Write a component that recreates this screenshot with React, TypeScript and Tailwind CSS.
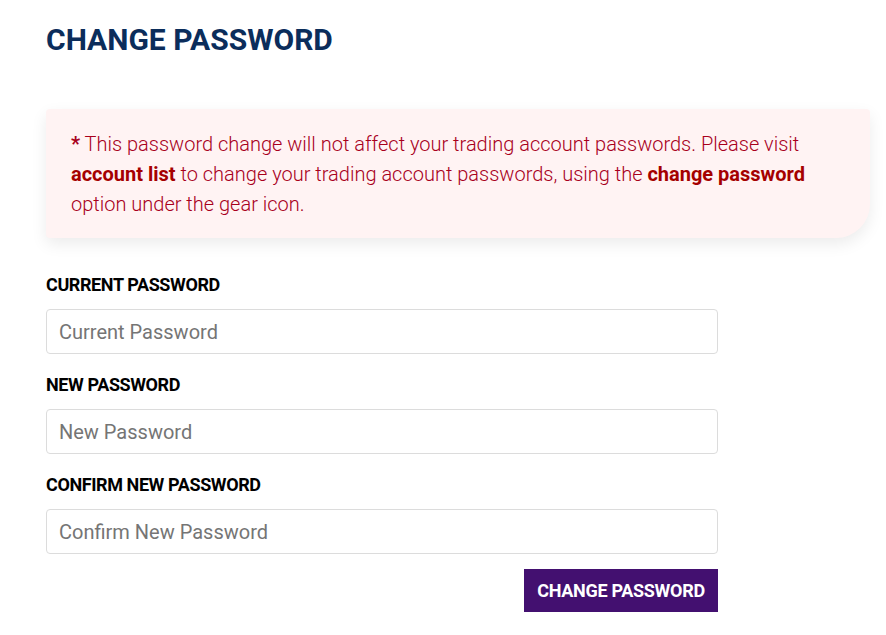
export default function App() {
  return (
    <div className="min-h-screen bg-white font-['Roboto',sans-serif]">
      <div className="pl-[46px] pr-[16px] pt-[20px]">
        <h1 className="text-[30px] leading-[40px] font-bold text-[#0b2d5b]">
          CHANGE PASSWORD
        </h1>
        <div className="mt-[49px] bg-[#fff3f3] rounded-tl-[4px] rounded-tr-[4px] rounded-bl-[4px] rounded-br-[34px] shadow-[0_6px_16px_rgba(0,0,0,0.08)] pl-[25px] pr-[40px] pt-[20px] pb-[19px]">
          <p className="text-[20px] leading-[30px] font-light text-[#a8001c]">
            <span className="font-bold">*</span> This password change will not affect your trading account passwords. Please visit{" "}
            <span className="font-bold text-[#a50000]">account list</span> to change your trading account passwords, using the{" "}
            <span className="font-bold text-[#a50000]">change password</span> option under the gear icon.
          </p>
        </div>
        <form className="w-[672px] mt-[35px] flex flex-col">
          {[
            ["CURRENT PASSWORD", "Current Password"],
            ["NEW PASSWORD", "New Password"],
            ["CONFIRM NEW PASSWORD", "Confirm New Password"],
          ].map(([label, ph], i) => (
            <div key={label} className={i > 0 ? "mt-[19px]" : ""}>
              <label className="block text-[18px] leading-[24px] font-bold text-black tracking-[-0.4px]">
                {label}
              </label>
              <input
                type="password"
                placeholder={ph}
                className="mt-[12px] block w-full h-[45px] rounded-[4px] border border-[#dcdcdc] px-[12px] text-[20px] placeholder:text-[#757575] outline-none"
              />
            </div>
          ))}
          <div className="flex justify-end mt-[15px]">
            <button
              type="button"
              className="h-[43px] w-[194px] bg-[#431070] text-white text-[18px] font-bold tracking-[-0.3px]"
            >
              CHANGE PASSWORD
            </button>
          </div>
        </form>
      </div>
    </div>
  );
}
